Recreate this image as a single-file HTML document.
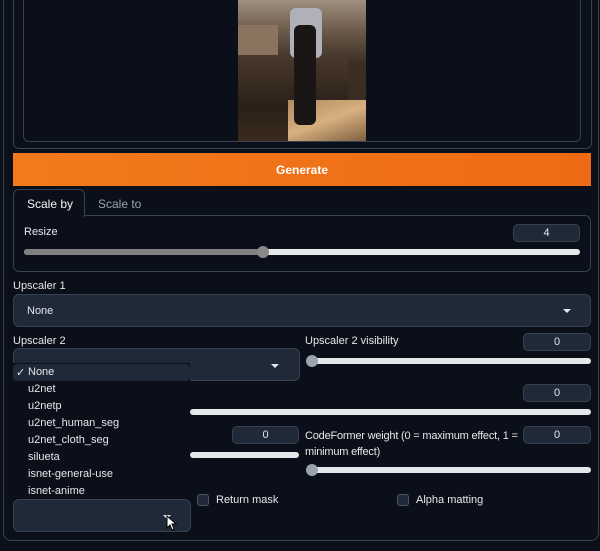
<!DOCTYPE html>
<html><head><meta charset="utf-8"><style>
*{box-sizing:border-box;margin:0;padding:0}
body{width:600px;height:551px;background:#0b0f19;position:relative;overflow:hidden;font-family:"Liberation Sans",sans-serif;font-size:11px;color:#e5e7eb}
.a{position:absolute}
.box{position:absolute;border:1px solid #374151;border-radius:6px}
.in{position:absolute;background:#1f2937;border:1px solid #374151;border-radius:6px}
.num{position:absolute;background:#1f2937;border:1px solid #374151;border-radius:5px;text-align:center;font-size:11px;line-height:16px;color:#e5e7eb}
.tr{position:absolute;height:6px;border-radius:3px;background:#e5e7eb}
.th{position:absolute;width:12px;height:12px;border-radius:50%;background:#9ca3af}
.arr{position:absolute;width:0;height:0;border-left:4px solid transparent;border-right:4px solid transparent;border-top:4px solid #e5e7eb}
.cb{position:absolute;width:12px;height:12px;border:1px solid #4b5563;border-radius:3px;background:#1f2937}
.li{position:absolute;left:28px;font-size:11px;color:#e5e7eb}
</style></head><body>
<div class="box" style="left:3px;top:-10px;width:596px;height:551px;border-radius:8px"></div>
<div class="box" style="left:13px;top:-10px;width:579px;height:159px"></div>
<div class="box" style="left:23px;top:-10px;width:558px;height:152px"></div>
<div class="a" style="left:238px;top:0;width:128px;height:141px;background:linear-gradient(180deg,#a09080 0%,#6b5a4a 22%,#3b2e24 45%,#3a2c22 70%,#8a6a48 90%,#6a5038 100%);overflow:hidden">
<div class="a" style="left:0;top:55px;width:110px;height:86px;background:linear-gradient(180deg,#4a3a2c,#2a2018 60%,#3a2a1c)"></div>
<div class="a" style="left:0;top:25px;width:40px;height:30px;background:#8a7460"></div>
<div class="a" style="left:50px;top:100px;width:78px;height:41px;background:linear-gradient(160deg,#b08a60,#d8b080 50%,#806040)"></div>
<div class="a" style="left:52px;top:8px;width:32px;height:50px;background:#b0b0b8;border-radius:6px"></div>
<div class="a" style="left:56px;top:25px;width:22px;height:100px;background:#1a1616;border-radius:6px"></div>
</div>
<div class="a" style="left:13px;top:153px;width:578px;height:33px;background:linear-gradient(90deg,#f27a1c,#ef6a14);text-align:center;line-height:34px;font-weight:bold;font-size:12px;color:#fff">Generate</div>
<div class="box" style="left:13px;top:215px;width:578px;height:57px;border-top-left-radius:0"></div>
<div class="a" style="left:13px;top:189px;width:72px;height:28px;border:1px solid #374151;border-bottom:none;border-radius:6px 6px 0 0;background:#0b0f19"></div>
<div class="a" style="left:27px;top:197px;font-size:12px;color:#f3f4f6">Scale by</div>
<div class="a" style="left:98px;top:197px;font-size:12px;color:#9ca3af">Scale to</div>
<div class="a" style="left:24px;top:226px">Resize</div>
<div class="num" style="left:513px;top:224px;width:67px;height:18px">4</div>
<div class="tr" style="left:24px;top:249px;width:556px"></div>
<div class="tr" style="left:24px;top:249px;width:240px;background:#808080"></div>
<div class="th" style="left:257px;top:246px;background:#8a8a8a"></div>
<div class="a" style="left:13px;top:280px">Upscaler 1</div>
<div class="in" style="left:13px;top:294px;width:578px;height:33px"></div>
<div class="a" style="left:27px;top:305px">None</div>
<div class="arr" style="left:563px;top:309px"></div>
<div class="a" style="left:13px;top:335px">Upscaler 2</div>
<div class="in" style="left:13px;top:348px;width:287px;height:33px"></div>
<div class="arr" style="left:271px;top:364px"></div>
<div class="a" style="left:305px;top:335px">Upscaler 2 visibility</div>
<div class="num" style="left:523px;top:333px;width:68px;height:18px">0</div>
<div class="tr" style="left:307px;top:358px;width:284px"></div>
<div class="th" style="left:306px;top:355px"></div>
<div class="num" style="left:523px;top:384px;width:68px;height:18px">0</div>
<div class="tr" style="left:190px;top:409px;width:401px"></div>
<div class="num" style="left:232px;top:426px;width:67px;height:18px">0</div>
<div class="tr" style="left:190px;top:452px;width:109px"></div>
<div class="a" style="left:305px;top:428px;line-height:16px;width:216px;letter-spacing:-0.2px">CodeFormer weight (0 = maximum effect, 1 = minimum effect)</div>
<div class="num" style="left:523px;top:426px;width:68px;height:18px">0</div>
<div class="tr" style="left:307px;top:467px;width:284px"></div>
<div class="th" style="left:306px;top:464px"></div>
<div class="cb" style="left:197px;top:494px"></div>
<div class="a" style="left:216px;top:494px">Return mask</div>
<div class="cb" style="left:397px;top:494px"></div>
<div class="a" style="left:416px;top:494px">Alpha matting</div>
<div class="a" style="left:13px;top:363px;width:177px;height:135px;background:#0b0f19"></div>
<div class="a" style="left:13px;top:364px;width:177px;height:17px;background:#1f2937;border-radius:4px"></div>
<div class="a" style="left:16px;top:366px;font-size:11px">✓</div>
<div class="li" style="top:366px">None</div>
<div class="li" style="top:383px">u2net</div>
<div class="li" style="top:400px">u2netp</div>
<div class="li" style="top:417px">u2net_human_seg</div>
<div class="li" style="top:434px">u2net_cloth_seg</div>
<div class="li" style="top:451px">silueta</div>
<div class="li" style="top:468px">isnet-general-use</div>
<div class="li" style="top:485px">isnet-anime</div>
<div class="in" style="left:13px;top:499px;width:178px;height:33px"></div>
<div class="arr" style="left:163px;top:515px"></div>
<svg class="a" style="left:166px;top:515px" width="12" height="16" viewBox="0 0 12 16"><path d="M1 1 L1 13 L4 10 L6 15 L8 14 L6 9 L10 9 Z" fill="#fff" stroke="#000" stroke-width="1"/></svg>
</body></html>
